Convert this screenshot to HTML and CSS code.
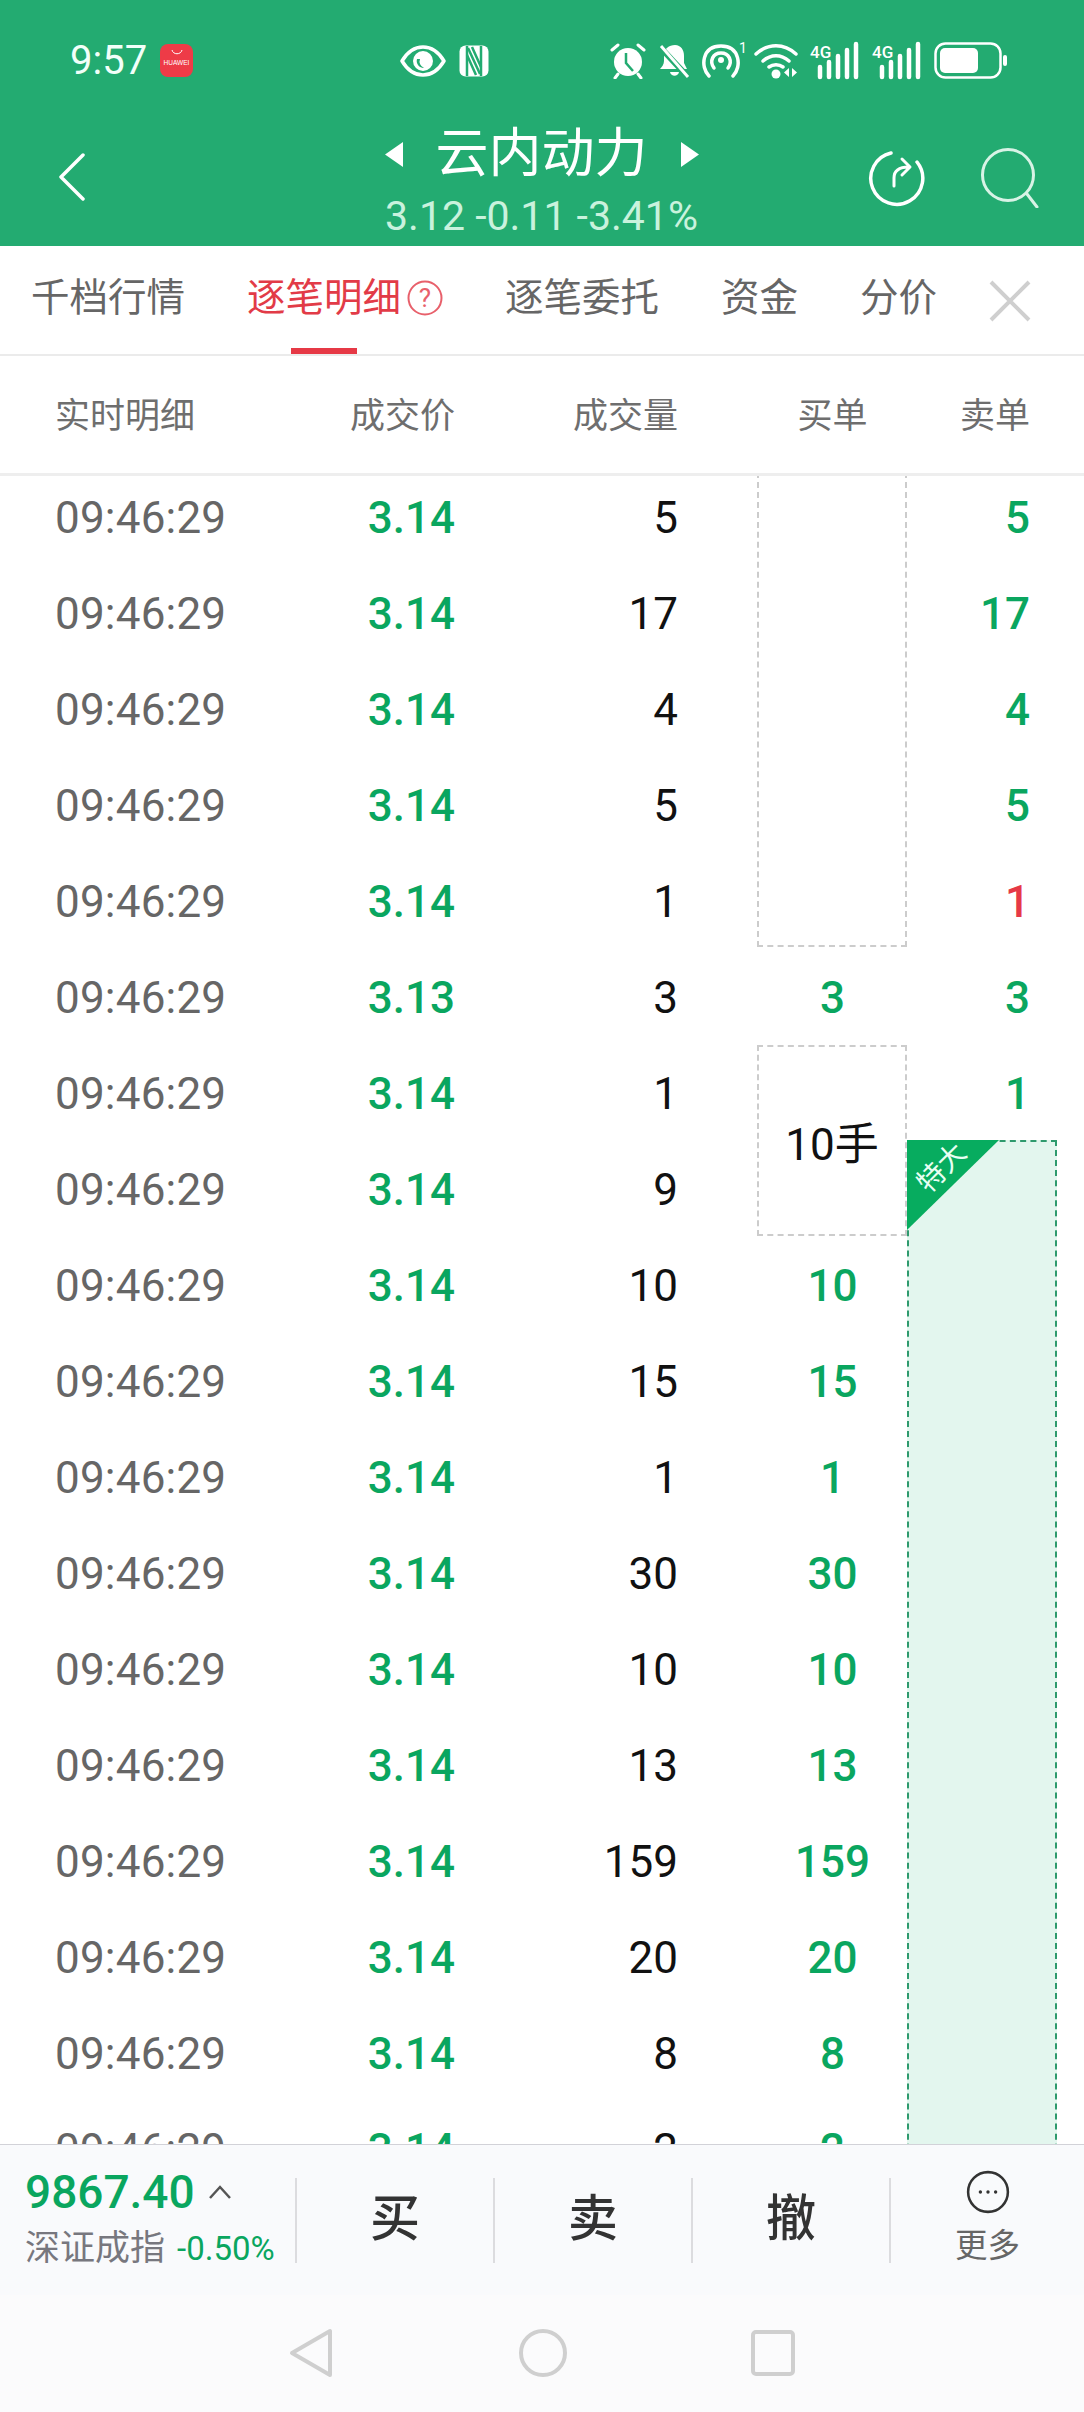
FILE: index.html
```html
<!DOCTYPE html>
<html lang="zh">
<head>
<meta charset="utf-8">
<title>云内动力</title>
<link rel="stylesheet" href="styles.css">
</head>
<body>
<div class="page">
  <header class="header">
    <div class="status">
      <div class="status-left">
        <span class="clock">9:57</span>
        <span class="huawei"><svg class="huawei-bag" width="12" height="6" viewBox="0 0 12 6"><path d="M1 1c1 5 9 5 10 0" fill="none" stroke="#fff" stroke-width="1"/></svg><span class="huawei-text">HUAWEI</span></span>
      </div>
      <div class="status-mid">
        <svg width="46" height="32" viewBox="0 0 46 32"><path d="M2 16C8 6 15 2 23 2s15 4 21 14c-6 10-13 14-21 14S8 26 2 16z" fill="none" stroke="#fff" stroke-width="3.5" stroke-linejoin="round"/><circle cx="23" cy="16" r="10" fill="#fff"/><path d="M17 14a7 7 0 0 0 7 9 7 7 0 0 1-4-9z" fill="#23ab71"/></svg>
        <svg width="32" height="34" viewBox="0 0 32 34"><rect x="1.5" y="1.5" width="29" height="31" rx="6" fill="#fff"/><path d="M9 2v30M23 2v30" stroke="#23ab71" stroke-width="2.5"/><path d="M10 4l12 26M14 3l9 20M9 11l9 20" stroke="#23ab71" stroke-width="2.5" fill="none"/></svg>
      </div>
      <div class="status-right">
        <svg width="36" height="36" viewBox="0 0 36 36"><path d="M2 7l6-5M34 7l-6-5M8 31l-3 4M28 31l3 4" stroke="#fff" stroke-width="3" stroke-linecap="round"/><circle cx="18" cy="19" r="14" fill="#fff"/><path d="M16 10v10l7 8" stroke="#23ab71" stroke-width="2.5" fill="none"/></svg>
        <svg width="32" height="36" viewBox="0 0 32 36"><path d="M17 2c6 0 9 5 9 11v7l3 6H2c2-2 4-5 4-8v-7c0-5 5-9 11-9z" fill="#fff"/><path d="M12 29h9c-1 5-8 5-9 0z" fill="#fff"/><path d="M2 4l28 30" stroke="#23ab71" stroke-width="6"/><path d="M3 3l27 31" stroke="#fff" stroke-width="3"/></svg>
        <span class="hotspot"><svg width="40" height="36" viewBox="0 0 40 36"><path d="M8 33C-1 24 1 3 20 3s21 21 12 30" transform="translate(-1 0)" fill="none" stroke="#fff" stroke-width="3.5" stroke-linecap="round"/><path d="M12 25c-5-7-1-15 7-15s12 8 7 15" fill="none" stroke="#fff" stroke-width="3.5" stroke-linecap="round"/><circle cx="19" cy="17" r="3" fill="#fff"/></svg><span class="hotspot-num">1</span></span>
        <svg width="44" height="36" viewBox="0 0 44 36"><path d="M2 11c12-11 28-11 40 0M9 18c8-7 18-7 26 0M15 24c4-3 10-3 14 0" fill="none" stroke="#fff" stroke-width="3.5" stroke-linecap="round"/><circle cx="22" cy="31" r="4.5" fill="#fff"/><path d="M35 25v9l-5-4.500zM38 25v9l5-4.500z" fill="#fff"/></svg>
        <span class="sig"><svg width="50" height="36" viewBox="0 0 50 36"><text x="0" y="15" class="sig-text">4G</text><path d="M11 24v10M20 19v15M29 13v21M38 7v27M47 1v33" transform="translate(-1 0)" stroke="#fff" stroke-width="4.500" stroke-linecap="round"/></svg></span>
        <span class="sig"><svg width="50" height="36" viewBox="0 0 50 36"><text x="0" y="15" class="sig-text">4G</text><path d="M11 24v10M20 19v15M29 13v21M38 7v27M47 1v33" transform="translate(-1 0)" stroke="#fff" stroke-width="4.500" stroke-linecap="round"/></svg></span>
        <svg width="74" height="37" viewBox="0 0 74 37"><rect x="1.500" y="1.500" width="65" height="34" rx="10" fill="none" stroke="#fff" stroke-width="2.500"/><rect x="6" y="6" width="38" height="25" rx="5" fill="#fff"/><rect x="69" y="13" width="4" height="11" rx="2" fill="#fff"/></svg>
      </div>
    </div>
    <div class="nav">
      <svg class="nav-back" width="27" height="48" viewBox="0 0 27 48"><path d="M25 2L3 24l22 22" fill="none" stroke="#fff" stroke-width="3.500" stroke-linecap="round" stroke-linejoin="round"/></svg>
      <div class="nav-center">
        <div class="nav-title">
          <svg width="18" height="25" viewBox="0 0 18 25"><path d="M18 0v25L0 12.500z" fill="#fff"/></svg>
          <span class="title-text">云内动力</span>
          <svg width="18" height="25" viewBox="0 0 18 25"><path d="M0 0v25l18-12.500z" fill="#fff"/></svg>
        </div>
        <div class="nav-sub">3.12 -0.11 -3.41%</div>
      </div>
      <div class="nav-actions">
        <svg width="60" height="60" viewBox="0 0 60 60"><path d="M24 5A26 26 0 1 0 50 14" fill="none" stroke="#fff" stroke-width="3.500" stroke-linecap="round"/><path d="M27 38V30c0-7 5-11 15-11M35 11l8 8-8 8" fill="none" stroke="#fff" stroke-width="3" stroke-linecap="round" stroke-linejoin="round"/></svg>
        <svg width="60" height="60" viewBox="0 0 60 60"><circle cx="28" cy="27" r="25.500" fill="none" stroke="#d8f3e6" stroke-width="3"/><path d="M47 46l10 13" stroke="#d8f3e6" stroke-width="3" stroke-linecap="round"/></svg>
      </div>
    </div>
  </header>

  <nav class="tabs">
    <span class="tab tab-a">千档行情</span>
    <span class="tab tab-on">逐笔明细<svg class="help" width="38" height="38" viewBox="0 0 38 38"><circle cx="19" cy="19" r="16.500" fill="none" stroke="#e8606b" stroke-width="2"/><text x="19" y="28" class="help-q">?</text></svg></span>
    <span class="tab tab-c">逐笔委托</span>
    <span class="tab tab-d">资金</span>
    <span class="tab tab-e">分价</span>
    <svg class="tab-close" width="44" height="44" viewBox="0 0 44 44"><path d="M3 3l38 38M41 3L3 41" stroke="#cfcfcf" stroke-width="4"/></svg>
  </nav>

  <div class="cols row-grid">
    <span>实时明细</span><span class="r">成交价</span><span class="r">成交量</span><span class="c">买单</span><span class="r">卖单</span>
  </div>

  <div class="list">
    <div class="rows">
      <div class="row row-grid"><span class="t">09:46:29</span><span class="p">3.14</span><span class="v">5</span><span class="b"></span><span class="s">5</span></div>
      <div class="row row-grid"><span class="t">09:46:29</span><span class="p">3.14</span><span class="v">17</span><span class="b"></span><span class="s">17</span></div>
      <div class="row row-grid"><span class="t">09:46:29</span><span class="p">3.14</span><span class="v">4</span><span class="b"></span><span class="s">4</span></div>
      <div class="row row-grid"><span class="t">09:46:29</span><span class="p">3.14</span><span class="v">5</span><span class="b"></span><span class="s">5</span></div>
      <div class="row row-grid"><span class="t">09:46:29</span><span class="p">3.14</span><span class="v">1</span><span class="b"></span><span class="s red">1</span></div>
      <div class="row row-grid"><span class="t">09:46:29</span><span class="p">3.13</span><span class="v">3</span><span class="b">3</span><span class="s">3</span></div>
      <div class="row row-grid"><span class="t">09:46:29</span><span class="p">3.14</span><span class="v">1</span><span class="b"></span><span class="s">1</span></div>
      <div class="row row-grid"><span class="t">09:46:29</span><span class="p">3.14</span><span class="v">9</span><span class="b"></span><span class="s"></span></div>
      <div class="row row-grid"><span class="t">09:46:29</span><span class="p">3.14</span><span class="v">10</span><span class="b">10</span><span class="s"></span></div>
      <div class="row row-grid"><span class="t">09:46:29</span><span class="p">3.14</span><span class="v">15</span><span class="b">15</span><span class="s"></span></div>
      <div class="row row-grid"><span class="t">09:46:29</span><span class="p">3.14</span><span class="v">1</span><span class="b">1</span><span class="s"></span></div>
      <div class="row row-grid"><span class="t">09:46:29</span><span class="p">3.14</span><span class="v">30</span><span class="b">30</span><span class="s"></span></div>
      <div class="row row-grid"><span class="t">09:46:29</span><span class="p">3.14</span><span class="v">10</span><span class="b">10</span><span class="s"></span></div>
      <div class="row row-grid"><span class="t">09:46:29</span><span class="p">3.14</span><span class="v">13</span><span class="b">13</span><span class="s"></span></div>
      <div class="row row-grid"><span class="t">09:46:29</span><span class="p">3.14</span><span class="v">159</span><span class="b">159</span><span class="s"></span></div>
      <div class="row row-grid"><span class="t">09:46:29</span><span class="p">3.14</span><span class="v">20</span><span class="b">20</span><span class="s"></span></div>
      <div class="row row-grid"><span class="t">09:46:29</span><span class="p">3.14</span><span class="v">8</span><span class="b">8</span><span class="s"></span></div>
      <div class="row row-grid"><span class="t">09:46:29</span><span class="p">3.14</span><span class="v">2</span><span class="b">2</span><span class="s"></span></div>
    </div>
    <div class="box box-top"></div>
    <div class="box box-ten">10手</div>
    <div class="box-big">
      <div class="corner"></div>
      <span class="corner-text">特大</span>
    </div>
  </div>

  <footer class="bar">
    <div class="index">
      <div class="index-top"><span class="index-val">9867.40</span><svg width="24" height="14" viewBox="0 0 24 14"><path d="M2 13L12 2l10 11" fill="none" stroke="#555" stroke-width="2.500"/></svg></div>
      <div class="index-bot"><span class="index-name">深证成指</span><span class="index-pct">-0.50%</span></div>
    </div>
    <div class="act">买</div>
    <div class="act">卖</div>
    <div class="act">撤</div>
    <div class="more">
      <svg width="52" height="52" viewBox="0 0 52 52"><circle cx="26" cy="26" r="23.500" fill="none" stroke="#333" stroke-width="3"/><circle cx="17" cy="26" r="2" fill="#333"/><circle cx="26" cy="26" r="2" fill="#333"/><circle cx="35" cy="26" r="2" fill="#333"/></svg>
      <span class="more-label">更多</span>
    </div>
  </footer>

  <div class="sysnav">
    <svg width="44" height="50" viewBox="0 0 44 50"><path d="M41 3v44L3 25z" fill="none" stroke="#cfcfcf" stroke-width="4" stroke-linejoin="round"/></svg>
    <svg width="50" height="50" viewBox="0 0 50 50"><circle cx="25" cy="25" r="22" fill="none" stroke="#cfcfcf" stroke-width="4"/></svg>
    <svg width="44" height="46" viewBox="0 0 44 46"><rect x="2" y="2" width="40" height="42" rx="3" fill="none" stroke="#cfcfcf" stroke-width="4"/></svg>
  </div>
</div>
</body>
</html>
```

FILE: styles.css
```css
* { box-sizing: border-box; }
html, body { margin: 0; padding: 0; background: #fff; }
body { font-family: Roboto, "Noto Sans CJK SC", sans-serif; }
.page { width: 1084px; height: 2412px; display: flex; flex-direction: column; overflow: hidden; }

.header { height: 246px; flex: none; background: #23ab71; color: #fff; }
.status { height: 37px; margin-top: 37px; display: grid; grid-template-columns: 400px 210px 1fr; align-items: center; }
.status-left { display: flex; align-items: center; padding-left: 70px; gap: 12px; }
.clock { font-size: 40px; width: 78px; color: #f2fff9; }
.huawei { width: 33px; height: 33px; border-radius: 8px; background: #ee3b47; display: flex; flex-direction: column; align-items: center; }
.huawei-bag { margin-top: 5px; }
.huawei-text { font-size: 6.500px; line-height: 8px; margin-top: 4px; color: #fff; font-family: "Liberation Sans", sans-serif; }
.status-mid { display: flex; align-items: center; gap: 12px; }
.status-right { display: flex; align-items: center; gap: 12px; }
.hotspot { display: block; position: relative; width: 40px; height: 36px; margin-left: 0; }
.hotspot svg { display: block; }
.hotspot-num { position: absolute; left: 37px; top: -3px; font-size: 14px; line-height: 16px; color: #fff; }
.sig { display: block; height: 36px; }
.sig svg { display: block; overflow: visible; }
.sig-text { font: 500 17px Roboto, sans-serif; fill: #fff; }

.nav { display: flex; height: 172px; position: relative; }
.nav-back { margin: 79px 0 0 58px; }
.nav-center { position: absolute; left: 380px; width: 323px; top: 52px; display: flex; flex-direction: column; align-items: center; }
.nav-title { display: flex; align-items: center; gap: 33px; height: 56px; }
.title-text { font-size: 53px; line-height: 56px; color: #fff; font-weight: 400; }
.nav-sub { margin-top: 10px; font-size: 41px; line-height: 48px; color: #c9f2dd; white-space: nowrap; }
.nav-actions { margin-left: auto; margin-right: 44px; padding-top: 74px; display: flex; gap: 53px; }

.tabs { height: 110px; flex: none; border-bottom: 2px solid #ebebeb; position: relative; color: #666; }
.tab { position: absolute; top: 26px; font-size: 38.500px; line-height: 52px; white-space: nowrap; }
.tab-a { left: 31px; }
.tab-on { left: 247px; color: #e23b47; display: flex; align-items: center; gap: 5px; }
.tab-on::after { content: ""; position: absolute; left: 44px; top: 76px; width: 66px; height: 6px; background: #e63946; }
.help-q { font: 26px Roboto, sans-serif; fill: #e8606b; text-anchor: middle; }
.tab-c { left: 505px; }
.tab-d { left: 721px; }
.tab-e { left: 860px; }
.tab-close { position: absolute; left: 988px; top: 33px; }

.row-grid { display: grid; grid-template-columns: 230px 170px 223px 80px 149px 123px; padding-left: 55px; align-items: center; }
.cols { height: 120px; flex: none; border-bottom: 3px solid #eeeeee; color: #6e6e6e; font-size: 35px; grid-template-columns: 230px 170px 223px 229px 123px; padding-bottom: 4px; }
.cols .r { text-align: right; }
.cols .c { text-align: center; padding-left: 80px; }

.list { position: relative; flex: 1; overflow: hidden; }
.rows { margin-top: -6px; }
.row { height: 96px; font-size: 44px; line-height: 96px; }
.row > span { display: block; white-space: nowrap; }
.t { color: #666; letter-spacing: 0.200px; }
.p { color: #0aa65f; text-align: right; font-weight: 500; }
.v { color: #111; text-align: right; grid-column: 3; }
.b { color: #0aa65f; text-align: center; grid-column: 5; font-weight: 500; }
.s { color: #0aa65f; text-align: right; font-weight: 500; }
.s.red { color: #e63946; }

.box { position: absolute; left: 757px; width: 150px; border: 2px dashed #cccccc; background: #fff; }
.box-top { top: -4px; height: 475px; background: transparent; }
.box-ten { top: 569px; height: 191px; font-size: 44px; color: #111; display: flex; align-items: center; justify-content: center; }
.box-big { position: absolute; left: 907px; top: 664px; width: 150px; height: 1100px; background: #e3f6ee; border: 2px dashed #2e9a6d; border-bottom: none; }
.corner { position: absolute; left: -2px; top: -2px; width: 92px; height: 90px; background: #07ac5f; clip-path: polygon(0 0, 100% 0, 0 100%); }
.corner-text { position: absolute; left: 3px; top: 12px; width: 60px; font-size: 28px; line-height: 28px; color: #e8fff3; text-align: center; transform: rotate(-45deg); white-space: nowrap; }

.bar { height: 151px; flex: none; background: #f9fafc; border-top: 1px solid #d2d2d8; display: flex; position: relative; padding-top: 33px; }
.index { width: 295px; height: 85px; padding-left: 25px; position: relative; }
.index-top { display: flex; align-items: center; gap: 13px; height: 34px; margin-top: -3px; }
.index-val { font-size: 46px; line-height: 34px; color: #0aa65f; font-weight: 500; }
.index-bot { display: flex; align-items: center; gap: 12px; margin-top: 23px; height: 34px; }
.index-name { font-size: 35px; line-height: 34px; color: #77777e; }
.index-pct { font-size: 33px; line-height: 34px; color: #0aa65f; }
.act { width: 198px; height: 85px; border-left: 2px solid #dcdcdf; text-align: center; font-size: 50px; line-height: 82px; color: #333; font-weight: 500; }
.more { flex: 1; height: 85px; border-left: 2px solid #dcdcdf; display: flex; flex-direction: column; align-items: center; position: relative; }
.more svg { margin-top: -8px; display: block; }
.more-label { font-size: 32.500px; line-height: 34px; color: #666; margin-top: 15px; }

.sysnav { height: 117px; flex: none; background: #fbfbfc; display: flex; align-items: flex-start; }
.sysnav svg { display: block; margin-top: 33px; }
.sysnav svg:nth-child(1) { margin-left: 289px; }
.sysnav svg:nth-child(2) { margin-left: 185px; }
.sysnav svg:nth-child(3) { margin-left: 183px; margin-top: 35px; }
```
